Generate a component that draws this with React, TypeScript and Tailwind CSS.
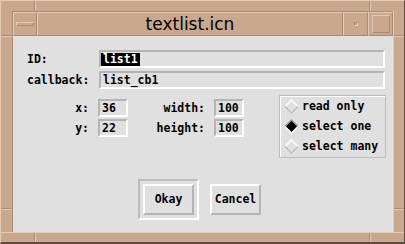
import React from "react";

const mono = "font-['DejaVu_Sans_Mono','Liberation_Mono',monospace] font-bold text-[11.5px] leading-[13px] text-black";

const Field = ({ value, className = "" }: { value: string; className?: string }) => (
  <div
    className={`h-[18px] border-2 border-t-[#b4b4b4] border-l-[#b4b4b4] border-b-white border-r-white bg-[#e0e0e0] flex items-center ${className}`}
  >
    <span className="px-[2px]">{value}</span>
  </div>
);

const Diamond = ({ on }: { on?: boolean }) => (
  <svg width="15" height="15" viewBox="0 0 15 15" className="shrink-0">
    {on && <polygon points="7.5,1 14,7.5 7.5,14 1,7.5" fill="#000" />}
    <polyline points="1,7.5 7.5,1 14,7.5" fill="none" stroke={on ? "#9a9a9a" : "#ffffff"} strokeWidth="1.4" />
    <polyline points="1,7.5 7.5,14 14,7.5" fill="none" stroke={on ? "#ffffff" : "#bdbdbd"} strokeWidth="1.4" />
  </svg>
);

const Radio = ({ label, on }: { label: string; on?: boolean }) => (
  <div className="h-[21px] flex items-center pl-[4px] gap-[3px]">
    <Diamond on={on} />
    <span>{label}</span>
  </div>
);

const Btn = ({ children }: { children: React.ReactNode }) => (
  <div className="w-[51px] h-[31px] border-2 border-t-white border-l-white border-b-[#b4b4b4] border-r-[#b4b4b4] flex items-center justify-center">
    {children}
  </div>
);

const seg = "border-r border-r-[#a88c78]";
const segL = "border-l border-l-[#e2cab4]";

export default function App() {
  return (
    <div className="w-[405px] h-[244px] bg-[#c9a88f] flex flex-col border-t border-l border-t-[#e2cab4] border-l-[#e2cab4] border-b-2 border-r border-b-[#5e4c40] border-r-[#5e4c40]">
      {/* top frame */}
      <div className="h-[10px] flex">
        <div className={`w-[34px] ${seg}`} />
        <div className={`flex-1 ${seg} ${segL}`} />
        <div className={`w-[34px] ${segL}`} />
      </div>
      <div className="flex-1 flex">
        {/* left frame */}
        <div className="w-[11px] flex flex-col">
          <div className="h-[25px] border-b border-b-[#a88c78]" />
          <div className="flex-1 border-t border-t-[#e2cab4] border-b border-b-[#a88c78]" />
          <div className="h-[23px] border-t border-t-[#e2cab4]" />
        </div>
        {/* center */}
        <div className="flex-1 flex flex-col border-l border-l-[#a88c78] border-r border-r-[#e2cab4]">
          {/* title bar */}
          <div className="h-[25px] flex border-t border-t-[#a88c78]">
            <div className="w-[24px] flex items-center justify-center border-t border-l border-t-[#e2cab4] border-l-[#e2cab4] border-b border-r border-b-[#a88c78] border-r-[#a88c78]">
              <div className="w-[18px] h-[4px] border-t border-l border-t-[#e2cab4] border-l-[#e2cab4] border-b border-r border-b-[#a88c78] border-r-[#a88c78]" />
            </div>
            <div className="flex-1 flex items-center justify-center border-t border-l border-t-[#e2cab4] border-l-[#e2cab4] border-b border-r border-b-[#a88c78] border-r-[#a88c78] font-['DejaVu_Sans',sans-serif] text-[17px] leading-[23px] text-black">
              textlist.icn
            </div>
            <div className="w-[25px] flex items-center justify-center border-t border-l border-t-[#e2cab4] border-l-[#e2cab4] border-b border-r border-b-[#a88c78] border-r-[#a88c78]">
              <div className="w-[4px] h-[4px] border-t border-l border-t-[#a88c78] border-l-[#a88c78] border-b border-r border-b-[#e2cab4] border-r-[#e2cab4]" />
            </div>
            <div className="w-[25px] flex items-center justify-center border-t border-l border-t-[#e2cab4] border-l-[#e2cab4] border-b border-r border-b-[#a88c78] border-r-[#a88c78]">
              <div className="w-[18px] h-[18px] border-t border-l border-t-[#e2cab4] border-l-[#e2cab4] border-b border-r border-b-[#a88c78] border-r-[#a88c78]" />
            </div>
          </div>
          {/* content */}
          <div className={`flex-1 bg-[#e0e0e0] flex flex-col pt-[14px] ${mono}`}>
            <div className="flex items-center pl-[14px] pr-[8px]">
              <div className="w-[72px]">ID:</div>
              <div className="flex-1 h-[18px] border-2 border-t-[#b4b4b4] border-l-[#b4b4b4] border-b-white border-r-white flex items-center">
                <span className="bg-black text-white px-[2px]">list1</span>
              </div>
            </div>
            <div className="flex items-center pl-[14px] pr-[8px] mt-[3px]">
              <div className="w-[72px]">callback:</div>
              <Field value="list_cb1" className="flex-1" />
            </div>
            <div className="flex items-start mt-[6px]">
              <div className="flex flex-col gap-[2px] mt-[4px]">
                <div className="flex items-center">
                  <div className="w-[76px] text-right">x:</div>
                  <Field value="36" className="w-[30px] ml-[9px]" />
                  <div className="w-[77px] text-right">width:</div>
                  <Field value="100" className="w-[30px] ml-[9px]" />
                </div>
                <div className="flex items-center">
                  <div className="w-[76px] text-right">y:</div>
                  <Field value="22" className="w-[30px] ml-[9px]" />
                  <div className="w-[77px] text-right">height:</div>
                  <Field value="100" className="w-[30px] ml-[9px]" />
                </div>
              </div>
              <div className="ml-[35px] w-[107px] h-[63px] border border-[#bdbdbd] shadow-[inset_1px_1px_0_#ffffff] flex flex-col">
                <Radio label="read only" />
                <Radio label="select one" on />
                <Radio label="select many" />
              </div>
            </div>
            <div className="flex items-center pl-[125px] mt-[21px]">
              <div className="border-2 border-t-[#bdbdbd] border-l-[#bdbdbd] border-b-white border-r-white p-[3px]">
                <Btn>Okay</Btn>
              </div>
              <div className="ml-[11px]">
                <Btn>Cancel</Btn>
              </div>
            </div>
          </div>
        </div>
        {/* right frame */}
        <div className="w-[10px] flex flex-col">
          <div className="h-[25px] border-b border-b-[#a88c78]" />
          <div className="flex-1 border-t border-t-[#e2cab4] border-b border-b-[#a88c78]" />
          <div className="h-[23px] border-t border-t-[#e2cab4]" />
        </div>
      </div>
      {/* bottom frame */}
      <div className="h-[10px] flex border-t border-t-[#e2cab4]">
        <div className={`w-[34px] ${seg}`} />
        <div className={`flex-1 ${seg} ${segL}`} />
        <div className={`w-[34px] ${segL}`} />
      </div>
    </div>
  );
}
